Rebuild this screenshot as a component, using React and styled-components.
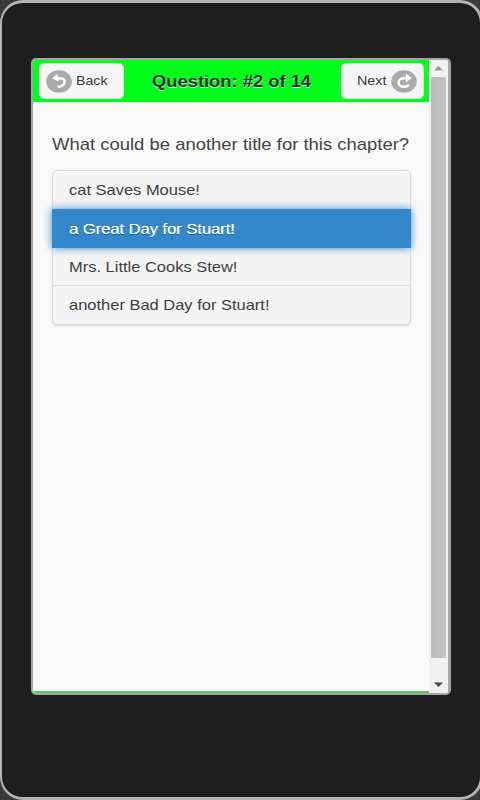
import React from "react";
import styled, { createGlobalStyle } from "styled-components";

const GlobalStyle = createGlobalStyle`
  * { box-sizing: border-box; }
  html, body { margin: 0; padding: 0; overflow: hidden; background: #3a3a3a; }
  body { font-family: "Liberation Sans", Arial, sans-serif; color: #444; }
`;

const Stage = styled.div`
  width: 480px;
  height: 800px;
  overflow: hidden;
`;

const Device = styled.main`
  width: 483px;
  height: 800px;
  padding: 55px 0 0 29px;
  background: #1e1e1e;
  border: 3px solid #b4b4b4;
  border-left-width: 2px;
  border-radius: 23px;
`;

const Screen = styled.div`
  display: flex;
  width: 420px;
  height: 637px;
  border: 2px solid #a6a4a6;
  border-right-width: 3px;
  border-radius: 5px;
  overflow: hidden;
  background: #f9f9f9;
`;

const Page = styled.section`
  display: flex;
  flex-direction: column;
  width: 396px;
  flex: none;
`;

const Header = styled.header`
  display: flex;
  align-items: center;
  justify-content: space-between;
  height: 42px;
  padding: 0 5px 0 6px;
  background: #00ff1c;
`;

const NavButton = styled.button`
  display: flex;
  align-items: center;
  width: ${(p) => p.$width}px;
  height: 36px;
  padding: ${(p) => p.$padding};
  gap: ${(p) => p.$gap}px;
  border: 1px solid #ddeedd;
  border-radius: 5px;
  background: #f6f6f6;
  color: #383838;
  font: 13.5px/16px "Liberation Sans", Arial, sans-serif;
`;

const WideText = styled.span`
  display: block;
  flex: none;
  width: ${(p) => p.$width}px;
  white-space: nowrap;
  text-align: left;
  transform: scaleX(${(p) => p.$scale});
  transform-origin: left center;
`;

const Title = styled.h1`
  width: 162px;
  margin: 0 0 1px;
  font-size: 16.5px;
  font-weight: bold;
  line-height: 20px;
  color: #333;
  text-shadow: 0 1px 0 #d9ecd9;
`;

const Content = styled.div`
  flex: 1;
  padding: 33px 18px 0 19px;
`;

const Question = styled.p`
  margin: 0 0 15px;
  font-size: 17px;
  line-height: 20px;
`;

const Choices = styled.ul`
  list-style: none;
  margin: 0;
  padding: 0;
  width: 359px;
  border: 1px solid #dadada;
  border-radius: 5px;
  background: #f5f5f5;
  box-shadow: 0 1px 2px rgba(0, 0, 0, 0.14);
`;

const Choice = styled.li`
  display: flex;
  align-items: center;
  height: ${(p) => p.$height}px;
  padding: 0 16px;
  font-size: 15px;
  line-height: 20px;
  color: #3e3e3e;
  border-top: ${(p) => (p.$divided ? "1px solid #dadada" : "0")};
  text-shadow: 0 1px 0 #f3f3f3;
  ${(p) =>
    p.$selected &&
    `
    margin: 0 -1px;
    padding: 0 17px;
    background: #3388cc;
    color: #fff;
    text-shadow: 0 1px 0 #1d5f94, 0.4px 0 0 #fff;
    box-shadow: 0 0 8px #3388cc;
  `}
`;

const FooterEdge = styled.footer`
  height: 2px;
  background: #50cf5c;
`;

const Scrollbar = styled.div`
  display: flex;
  flex-direction: column;
  align-items: center;
  width: 19px;
  background: #f1f1f1;
`;

const ArrowCell = styled.div`
  display: flex;
  align-items: center;
  justify-content: center;
  flex: none;
  height: ${(p) => p.$height}px;
  padding-top: ${(p) => p.$offset || 0}px;
`;

const Thumb = styled.div`
  flex: none;
  width: 15px;
  height: 581px;
  background: linear-gradient(90deg, #bababa, #c4c4c4);
`;

function BackIcon() {
  return (
    <svg width="26" height="23" viewBox="0 0 26 23">
      <ellipse cx="13" cy="11.5" rx="12.8" ry="11.3" fill="#aaa" />
      <path d="M5.8 8.3 L11.4 4 L12.6 11.6 Z" fill="#fff" />
      <path
        d="M10.5 8.4 C17 7.4 19.3 9.6 18.5 12.6 C17.8 15.2 15.4 16.4 11.6 17"
        fill="none"
        stroke="#fff"
        strokeWidth="2.5"
      />
    </svg>
  );
}

function ForwardIcon() {
  return (
    <svg width="26" height="23" viewBox="0 0 26 23">
      <ellipse cx="13" cy="11.5" rx="12.8" ry="11.3" fill="#aaa" />
      <path d="M20.6 8.1 L14.8 3.6 V12.4 Z" fill="#fff" />
      <path
        d="M15.5 8.2 H12.6 C5.8 8.4 6 16.8 12.6 16.8 C15 16.8 16.6 16.2 18 14.8"
        fill="none"
        stroke="#fff"
        strokeWidth="2.4"
      />
    </svg>
  );
}

function Arrow({ down }) {
  return (
    <svg width="9" height="5" viewBox="0 0 9 5">
      <path d={down ? "M0 0.5H9L4.5 5Z" : "M0 4.5H9L4.5 0Z"} fill={down ? "#454545" : "#999"} />
    </svg>
  );
}

const choices = [
  { text: "cat Saves Mouse!", height: 38 },
  { text: "a Great Day for Stuart!", height: 39, selected: true },
  { text: "Mrs. Little Cooks Stew!", height: 37 },
  { text: "another Bad Day for Stuart!", height: 39, divided: true },
];

export default function App() {
  return (
    <>
      <GlobalStyle />
      <Stage>
        <Device>
          <Screen>
            <Page>
              <Header>
                <NavButton $width={85} $padding="0 0 0 6px" $gap={4}>
                  <BackIcon />
                  <WideText $width={32} $scale={1.05}>Back</WideText>
                </NavButton>
                <Title>
                  <WideText $width={160} $scale={1.112}>Question: #2 of 14</WideText>
                </Title>
                <NavButton $width={83} $padding="0 0 0 15px" $gap={4}>
                  <WideText $width={30} $scale={1.06}>Next</WideText>
                  <ForwardIcon />
                </NavButton>
              </Header>
              <Content>
                <Question>
                  <WideText $width={357} $scale={1.086}>
                    What could be another title for this chapter?
                  </WideText>
                </Question>
                <Choices>
                  {choices.map((c) => (
                    <Choice key={c.text} $height={c.height} $selected={c.selected} $divided={c.divided}>
                      <WideText $width={200} $scale={1.098}>{c.text}</WideText>
                    </Choice>
                  ))}
                </Choices>
              </Content>
              <FooterEdge />
            </Page>
            <Scrollbar>
              <ArrowCell $height={17}><Arrow /></ArrowCell>
              <Thumb />
              <ArrowCell $height={35} $offset={17}><Arrow down /></ArrowCell>
            </Scrollbar>
          </Screen>
        </Device>
      </Stage>
    </>
  );
}
